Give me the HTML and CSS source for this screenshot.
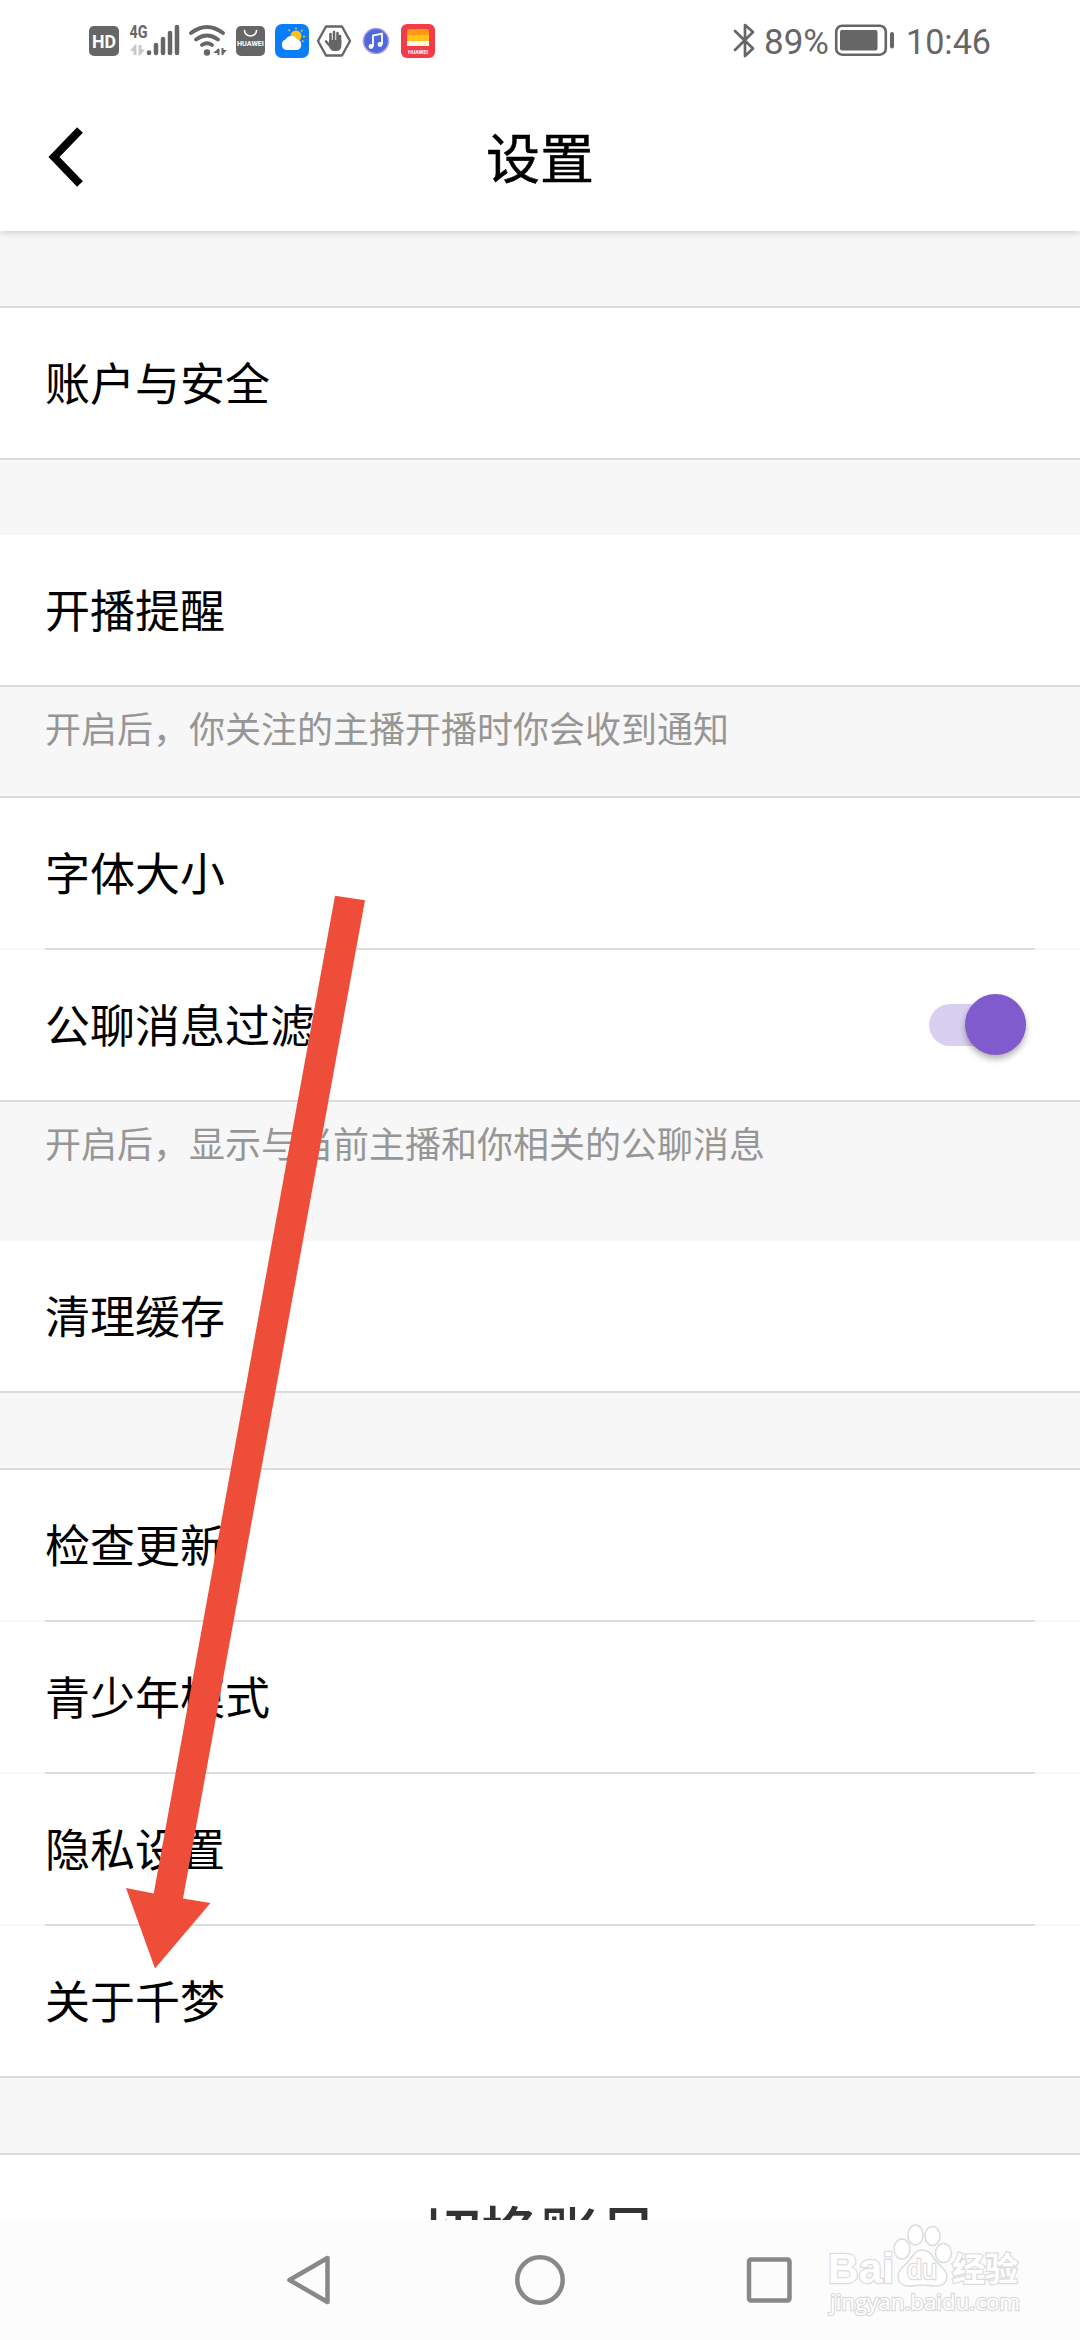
FILE: index.html
```html
<!DOCTYPE html>
<html lang="zh-CN">
  <head>
    <meta charset="utf-8">
    <title>设置</title>
    <link rel="stylesheet" href="styles.css">
  </head>
  <body>
    <div class="status-bar">
      <div class="status-left">
        <!-- HD -->
        <svg width="39" height="44" viewBox="85 20 39 44">
          <rect x="89" y="26" width="30" height="30" rx="5" fill="#666"/>
          <text x="104" y="48" class="hd" textLength="24" lengthAdjust="spacingAndGlyphs">HD</text>
        </svg>
        <!-- 4G signal -->
        <svg width="60" height="44" viewBox="124 20 60 44">
          <text x="129.500" y="38" class="net" textLength="18" lengthAdjust="spacingAndGlyphs">4G</text>
          <path d="M136.500 55h-3v-4H130l5-6.500h1.500zM138.500 45h3v4.500h3.500l-5 6h-1.500z" fill="#c8c8c8"/>
          <path d="M149 52.500v.5M156 45v8M163 39v14M170 33v20M177 27v26" stroke="#666" stroke-width="4.500" stroke-linecap="round"/>
        </svg>
        <!-- wifi -->
        <svg width="49" height="44" viewBox="184 20 49 44">
          <g fill="none" stroke="#666" stroke-width="3.800" stroke-linecap="round">
            <path d="M191 33q16-12 32 0M196 39.500q11-8 22 0M202 45q5-3.500 10 0"/>
          </g>
          <circle cx="207" cy="52.500" r="3.200" fill="#666"/>
          <path d="M219 55V48l-6 5h6zM222 47v8l5-5h-5z" fill="#666"/>
          <path d="M218.500 55v-6M222.500 48v7" stroke="#666" stroke-width="2"/>
        </svg>
        <!-- app gallery -->
        <svg width="38" height="44" viewBox="233 20 38 44">
          <rect x="236" y="26" width="29" height="30" rx="5" fill="#666"/>
          <path d="M244.500 30.500a6 5.500 0 0 0 12 0" fill="none" stroke="#fff" stroke-width="1.600" stroke-linecap="round"/>
          <text x="250.500" y="46" class="brand" textLength="27" lengthAdjust="spacingAndGlyphs">HUAWEI</text>
        </svg>
        <!-- weather -->
        <svg width="43" height="44" viewBox="271 20 43 44">
          <rect x="275" y="24" width="34" height="34" rx="7" fill="#0a7dfb"/>
          <circle cx="296" cy="36" r="5.500" fill="#fdc21c"/>
          <path d="M296 29.500v-2M301 31.500l1.500-1.500M303 36.500h2M290 31l-1.500-1.500M302 40.500l1.500 1.500" stroke="#fdc21c" stroke-width="1.400"/>
          <path d="M286 50a5.500 5.500 0 0 1-.5-10.500 6.500 6.500 0 0 1 11.500-.2 5.500 5.500 0 0 1 0 10.700z" fill="#fff"/>
        </svg>
        <!-- hand -->
        <svg width="42" height="44" viewBox="314 20 42 44">
          <path d="M326 26.500h16l8 14.500-8 14.500h-16l-8-14.500z" fill="#fff" stroke="#666" stroke-width="2.400" stroke-linejoin="round"/>
          <path d="M330.500 34v9M334 32v10M337.500 33v9M340 36v8M326 41.500l4.500 5" stroke="#666" stroke-width="2.600" stroke-linecap="round"/>
          <path d="M329 40h12.300v6q0 5-5.300 5h-2q-3 0-4.500-3.500z" fill="#666"/>
        </svg>
        <!-- music -->
        <svg width="41" height="44" viewBox="356 20 41 44">
          <circle cx="376" cy="41" r="12.500" fill="#5068d8" stroke="#a69bea" stroke-width="1.500"/>
          <path d="M373 46.500v-11l9-2v11" fill="none" stroke="#fff" stroke-width="1.800"/>
          <circle cx="371" cy="46.500" r="2.400" fill="#fff"/>
          <circle cx="380" cy="44.500" r="2.400" fill="#fff"/>
        </svg>
        <!-- wallet -->
        <svg width="42" height="44" viewBox="397 20 42 44">
          <rect x="401" y="24" width="34" height="34" rx="6" fill="#f43c48"/>
          <path d="M407 36v-5q0-2 2-2h18q2 0 2 2v5z" fill="#ff9a12"/>
          <path d="M407 35h22v6h-22z" fill="#ffc21a"/>
          <path d="M407 41h22v5h-22z" fill="#fff6dc"/>
          <text x="418" y="53.500" class="brand small" textLength="20" lengthAdjust="spacingAndGlyphs">HUAWEI</text>
        </svg>
      </div>
      <div class="status-right">
        <!-- bluetooth -->
        <svg width="32" height="44" viewBox="730 20 32 44">
          <path d="M735 31l18 17.500-8 7.500V25l8 7-18 18" fill="none" stroke="#666" stroke-width="2.700" stroke-linejoin="round" stroke-linecap="round"/>
        </svg>
        <svg width="70" height="44" viewBox="762 20 70 44">
          <text x="764" y="54" class="status-text" textLength="65" lengthAdjust="spacingAndGlyphs">89%</text>
        </svg>
        <!-- battery -->
        <svg width="70" height="44" viewBox="832 20 70 44">
          <rect x="836.200" y="25.700" width="49.600" height="29" rx="6" fill="none" stroke="#666" stroke-width="2.600"/>
          <rect x="840" y="30" width="37.500" height="20.500" rx="2" fill="#666"/>
          <path d="M892 34v12.500" stroke="#666" stroke-width="4" stroke-linecap="round"/>
        </svg>
        <svg width="92" height="44" viewBox="902 20 92 44">
          <text x="906" y="54" class="status-text" textLength="85" lengthAdjust="spacingAndGlyphs">10:46</text>
        </svg>
      </div>
    </div>

    <header class="header">
      <svg class="back" width="36" height="60" viewBox="0 0 36 60">
        <path d="M32 3L6 30l26 27" fill="none" stroke="#000" stroke-width="8"/>
      </svg>
      <h1>设置</h1>
    </header>

    <main class="settings">
      <section class="group line-top">
        <div class="row">账户与安全</div>
      </section>
      <div class="gap"></div>
      <section class="group">
        <div class="row">开播提醒</div>
      </section>
      <p class="note">开启后，你关注的主播开播时你会收到通知</p>
      <section class="group line-top">
        <div class="row">字体大小</div>
        <hr class="divider">
        <div class="row">公聊消息过滤<span class="switch"><span class="thumb"></span></span></div>
      </section>
      <p class="note note-last">开启后，显示与当前主播和你相关的公聊消息</p>
      <section class="group">
        <div class="row">清理缓存</div>
      </section>
      <div class="gap"></div>
      <section class="group line-top">
        <div class="row">检查更新</div>
        <hr class="divider">
        <div class="row">青少年模式</div>
        <hr class="divider">
        <div class="row">隐私设置</div>
        <hr class="divider">
        <div class="row">关于千梦</div>
      </section>
      <div class="gap"></div>
      <section class="group line-top">
        <div class="row switch-account">切换账号</div>
      </section>
    </main>

    <nav class="nav-bar">
      <svg width="54" height="54" viewBox="0 0 54 54">
        <path d="M43.500 5v44L5.500 27z"/>
      </svg>
      <svg width="54" height="54" viewBox="0 0 54 54">
        <circle cx="27" cy="27" r="22.700"/>
      </svg>
      <svg width="54" height="54" viewBox="0 0 54 54">
        <rect x="7" y="6.500" width="40.500" height="41" rx="2"/>
      </svg>
    </nav>

    <svg class="arrow" width="246" height="1080" viewBox="122 892 246 1080">
      <path d="M335 895.700L365 900.300 183 1898.500 210.500 1903 155 1968.500 126 1888 153.700 1893.500z"/>
    </svg>

    <svg class="watermark" width="216" height="112" viewBox="820 2216 216 112">
      <text x="828" y="2283" class="wm-logo" textLength="66" lengthAdjust="spacingAndGlyphs">Bai</text>
      <ellipse cx="902" cy="2249" rx="8" ry="10"/>
      <ellipse cx="915.500" cy="2235" rx="7.500" ry="10"/>
      <ellipse cx="932.500" cy="2236" rx="7.500" ry="9.500"/>
      <ellipse cx="943.500" cy="2253" rx="8" ry="9.500"/>
      <path d="M922 2250c8 0 10 6 14 11s11 9 11 15c0 8-6 10-12 10-5 0-8-1-13-1s-8 1-13 1c-7 0-11-4-11-10 0-7 7-10 11-15s6-11 13-11z"/>
      <text x="907" y="2279" class="wm-du" textLength="30" lengthAdjust="spacingAndGlyphs">du</text>
      <text x="952" y="2281" class="wm-cn" textLength="66" lengthAdjust="spacingAndGlyphs">经验</text>
      <text x="830" y="2310" class="wm-url" textLength="190" lengthAdjust="spacingAndGlyphs">jingyan.baidu.com</text>
    </svg>
  </body>
</html>
```

FILE: styles.css
```css
* {
  box-sizing: border-box;
}
body {
  display: flex;
  flex-direction: column;
  position: relative;
  height: 2340px;
  margin: 0;
  overflow: hidden;
  background-color: #f7f7f7;
  color: #000;
  font-family: "Noto Sans CJK SC", sans-serif;
}
svg {
  display: block;
  flex: none;
}

/* status bar */
.status-bar {
  display: flex;
  justify-content: space-between;
  flex: none;
  position: relative;
  z-index: 2;
  height: 82px;
  padding: 20px 86px 0 85px;
  background-color: #fff;
}
.status-left, .status-right {
  display: flex;
}
.status-text {
  font-family: Roboto, sans-serif;
  font-size: 35px;
  fill: #666;
}
.hd {
  font: bold 19px Roboto, sans-serif;
  fill: #fff;
  text-anchor: middle;
}
.net {
  font: bold 18px Roboto, sans-serif;
  fill: #666;
}
.brand {
  font: bold 7px Roboto, sans-serif;
  fill: #fff;
  text-anchor: middle;
}
.brand.small {
  font-size: 5px;
}

/* title bar */
.header {
  display: grid;
  grid-template-columns: 1fr auto 1fr;
  align-items: center;
  flex: none;
  position: relative;
  z-index: 1;
  height: 149px;
  padding: 0 48px;
  background-color: #fff;
  box-shadow: 0 1px 8px rgba(0, 0, 0, 0.2);
}
.header h1 {
  margin: 0;
  padding-bottom: 2px;
  font-size: 54px;
  font-weight: 400;
  line-height: 80px;
  -webkit-text-stroke: 0.5px #000;
}

/* list */
.settings {
  flex: 1;
  min-height: 0;
  padding-top: 75px;
  overflow: hidden;
}
.group {
  border-bottom: 2px solid #dcdcdc;
}
.line-top {
  border-top: 2px solid #dcdcdc;
}
.row {
  display: flex;
  align-items: center;
  justify-content: space-between;
  height: 150px;
  padding: 0 54px 3px 45px;
  background-color: #fff;
  font-size: 45px;
}
.divider {
  height: 2px;
  margin: 0 45px;
  border: 0;
  background-color: #dcdcdc;
}
.gap {
  height: 75px;
}
.note {
  height: 109px;
  margin: 0;
  padding: 13px 45px 0;
  color: #969696;
  font-size: 36px;
  line-height: 54px;
}
.note-last {
  height: 139px;
}
.switch {
  display: flex;
  align-items: center;
  justify-content: flex-end;
  width: 97px;
  height: 42px;
  margin-top: 2px;
  border-radius: 21px;
  background-color: #d9cff1;
}
.thumb {
  flex: none;
  width: 61px;
  height: 61px;
  border-radius: 50%;
  background-color: #805bce;
  box-shadow: 0 4px 6px rgba(0, 0, 0, 0.3);
}
.switch-account {
  justify-content: center;
  padding: 0;
  color: #333;
  font-size: 59px;
  font-weight: 500;
}

/* navigation keys */
.nav-bar {
  display: flex;
  justify-content: center;
  align-items: center;
  gap: 175px;
  flex: none;
  height: 120px;
  background-color: #fcfcfc;
}
.nav-bar svg {
  fill: none;
  stroke: #888;
  stroke-width: 4.5;
  stroke-linejoin: round;
}

/* overlays */
.arrow {
  position: absolute;
  left: 122px;
  top: 892px;
  z-index: 2;
  fill: #ee4e39;
}
.watermark {
  position: absolute;
  left: 820px;
  top: 2216px;
  z-index: 2;
  fill: #fff;
  stroke: #dcdcdc;
  stroke-width: 1.5;
}
.watermark text {
  paint-order: stroke;
  stroke-width: 2.5;
}
.wm-logo {
  font: bold 43px "Liberation Sans", sans-serif;
}
.wm-du {
  font: 28px "Liberation Sans", sans-serif;
}
.wm-cn {
  font: bold 33px "Noto Sans CJK SC", sans-serif;
}
.wm-url {
  font: 22px "Open Sans", sans-serif;
}
```
